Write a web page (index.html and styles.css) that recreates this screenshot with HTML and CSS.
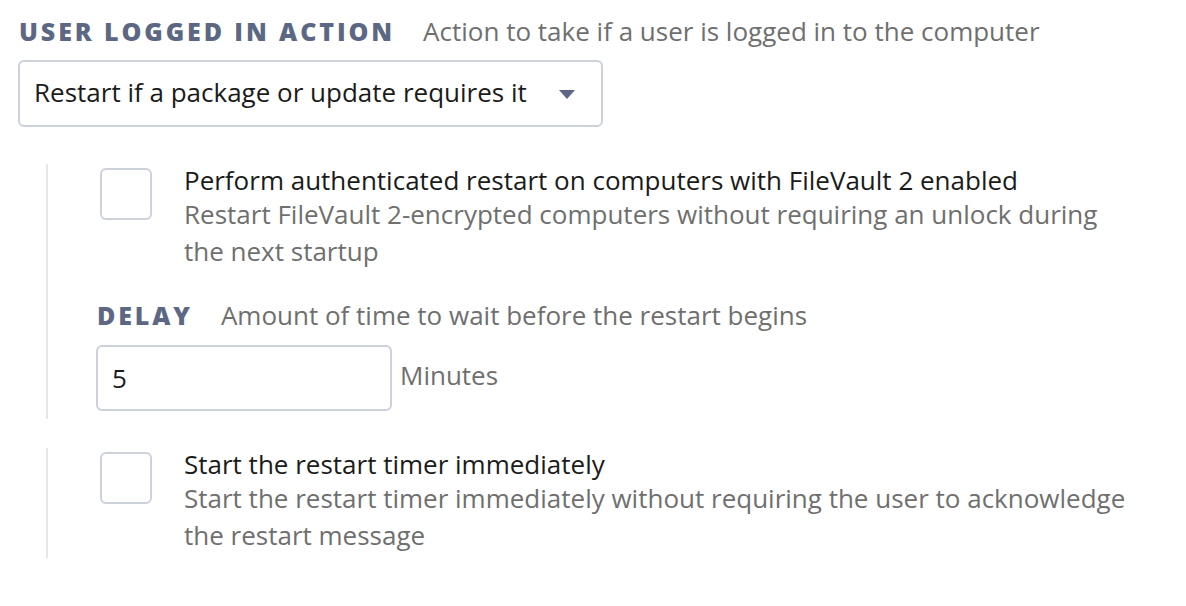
FILE: index.html
```html
<!DOCTYPE html>
<html lang="en">
<head>
  <meta charset="UTF-8">
  <meta name="viewport" content="width=device-width, initial-scale=1.0">
  <title>Restart options</title>
  <link rel="stylesheet" href="styles.css">
</head>
<body>
  <div class="field">
    <div class="field-head">
      <span class="field-label">User logged in action</span>
      <span class="field-help">Action to take if a user is logged in to the computer</span>
    </div>

    <div class="select">
      <span>Restart if a package or update requires it</span>
      <svg class="caret" width="16" height="9" viewBox="0 0 16 9"><path d="M0 0h16L8 9z" fill="#5c6883"/></svg>
    </div>

    <div class="sub">
      <label class="check-row">
        <input type="checkbox" class="box">
        <span class="check-text">
          <span class="check-title">Perform authenticated restart on computers with FileVault 2 enabled</span>
          <span class="check-desc">Restart FileVault 2-encrypted computers without requiring an unlock during the next startup</span>
        </span>
      </label>

      <div class="field-head delay-head">
        <span class="field-label">Delay</span>
        <span class="field-help">Amount of time to wait before the restart begins</span>
      </div>
      <div class="input-row">
        <input type="text" class="text-input" value="5">
        <span class="unit">Minutes</span>
      </div>
    </div>

    <div class="sub sub-last">
      <label class="check-row">
        <input type="checkbox" class="box">
        <span class="check-text">
          <span class="check-title">Start the restart timer immediately</span>
          <span class="check-desc">Start the restart timer immediately without requiring the user to acknowledge the restart message</span>
        </span>
      </label>
    </div>
  </div>
</body>
</html>
```

FILE: styles.css
```css
body {
  margin: 0;
  background: #fff;
  font-family: "Open Sans", Lato, sans-serif;
  color: #1b1b1b;
}

.field {
  padding: 15px 0 0 18px;
  width: 1122px;
}

.field-head {
  display: flex;
  align-items: baseline;
  gap: 28px;
  line-height: 32px;
}

.field-label {
  font-size: 25px;
  font-weight: 800;
  letter-spacing: 2.9px;
  text-transform: uppercase;
  color: #5c6883;
  padding-left: 1px;
}

.field-help {
  font-size: 26px;
  color: #6f6f6f;
}

.select {
  margin-top: 13px;
  box-sizing: border-box;
  width: 585px;
  height: 67px;
  border: 2px solid #cdd1da;
  border-radius: 6px;
  display: flex;
  align-items: center;
  justify-content: space-between;
  padding: 0 26px 4px 14px;
  font-size: 26px;
}

.caret {
  margin-top: 6px;
}

.sub {
  margin: 37px 0 0 28px;
  border-left: 2px solid #e4e7ee;
  padding: 4px 0 8px 48px;
}

.sub-last {
  margin-top: 29px;
  padding-bottom: 4px;
}

.check-row {
  display: flex;
  gap: 32px;
  padding-left: 4px;
}

.box {
  appearance: none;
  -webkit-appearance: none;
  margin: 0;
  flex: none;
  width: 52px;
  height: 52px;
  border: 2px solid #cdd1da;
  border-radius: 6px;
  background: #fff;
}

.check-text {
  display: flex;
  flex-direction: column;
  margin-top: -4px;
}

.check-title {
  font-size: 26px;
  line-height: 32px;
}

.check-desc {
  font-size: 26px;
  line-height: 37px;
  color: #6f6f6f;
}

.delay-head {
  margin-top: 29px;
}

.input-row {
  display: flex;
  align-items: center;
  gap: 8px;
  margin-top: 14px;
}

.text-input {
  width: 296px;
  height: 66px;
  box-sizing: border-box;
  border: 2px solid #cdd1da;
  border-radius: 6px;
  padding: 0 14px;
  font-family: inherit;
  font-size: 26px;
  color: #1b1b1b;
  margin: 0;
}

.unit {
  font-size: 26px;
  color: #6f6f6f;
  margin-top: -6px;
}
```
